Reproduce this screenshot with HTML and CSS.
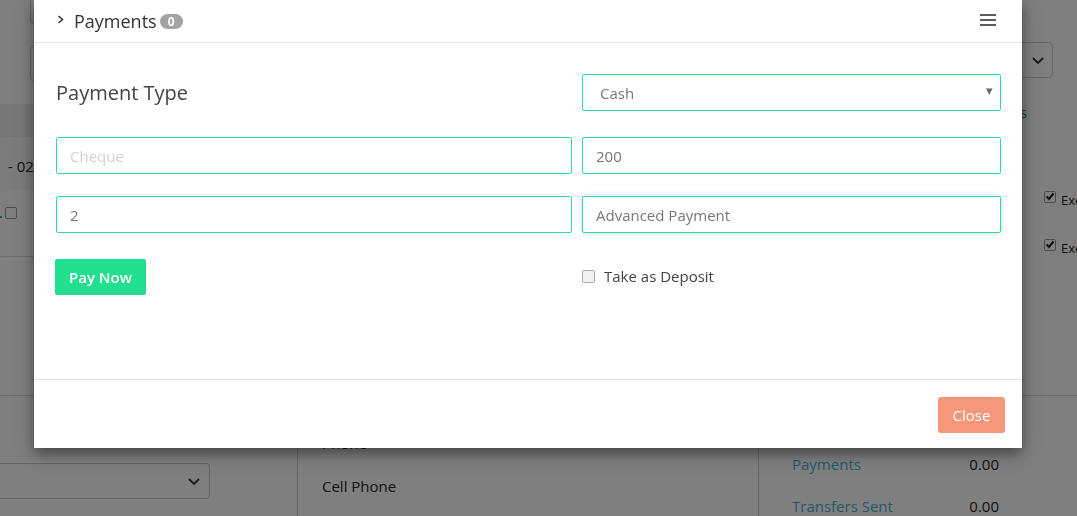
FILE: index.html
```html
<!DOCTYPE html>
<html lang="en">
<head>
<meta charset="utf-8">
<title>Payments</title>
<link rel="stylesheet" href="styles.css">
</head>
<body>
<div class="page">
  <section class="top">
    <div class="top-main">
      <div class="filter-row first"><div class="fake-input"></div></div>
      <div class="filter-row second"><div class="fake-input"></div></div>
      <div class="thead"></div>
      <div class="trow striped"><span class="cell-text">- 02-2019</span></div>
      <div class="trow tall"><span class="dot"></span><span class="cb"></span></div>
      <div class="tfill"></div>
    </div>
    <div class="top-side">
      <div class="side-select">
        <svg class="chev-down" width="12" height="7" viewBox="0 0 12 7"><polyline points="1,1 6,6 11,1" fill="none" stroke="#333" stroke-width="1.8"/></svg>
      </div>
      <div class="side-link">Transactions</div>
      <div class="side-check first"><span class="cb checked"><svg width="10" height="9" viewBox="0 0 10 9"><polyline points="1.5,4.5 4,7 8.5,1.5" fill="none" stroke="#222" stroke-width="2"/></svg></span><span>Exempt</span></div>
      <div class="side-check"><span class="cb checked"><svg width="10" height="9" viewBox="0 0 10 9"><polyline points="1.5,4.5 4,7 8.5,1.5" fill="none" stroke="#222" stroke-width="2"/></svg></span><span>Exempt</span></div>
    </div>
  </section>
  <section class="bottom">
    <div class="col-left">
      <div class="bottom-select">
        <svg class="chev-down" width="12" height="7" viewBox="0 0 12 7"><polyline points="1,1 6,6 11,1" fill="none" stroke="#333" stroke-width="1.8"/></svg>
      </div>
    </div>
    <div class="col-mid">
      <div class="mid-line">Phone</div>
      <div class="mid-line">Cell Phone</div>
    </div>
    <div class="col-right">
      <div class="sum-row"><span class="sum-link">Payments</span><span class="sum-val">0.00</span></div>
      <div class="sum-row"><span class="sum-link">Transfers Sent</span><span class="sum-val">0.00</span></div>
    </div>
  </section>
</div>

<div class="backdrop"></div>

<div class="modal">
  <div class="modal-header">
    <svg class="chev-right" width="7" height="9" viewBox="0 0 7 9"><polyline points="1.5,1 5.5,4.5 1.5,8" fill="none" stroke="#333" stroke-width="1.5"/></svg>
    <span class="modal-title">Payments</span>
    <span class="badge">0</span>
    <span class="spacer"></span>
    <svg class="hamburger" width="16" height="12" viewBox="0 0 16 12"><line x1="0" y1="1" x2="16" y2="1" stroke="#333" stroke-width="1.6"/><line x1="0" y1="6" x2="16" y2="6" stroke="#333" stroke-width="1.6"/><line x1="0" y1="11" x2="16" y2="11" stroke="#333" stroke-width="1.6"/></svg>
  </div>
  <div class="modal-body">
    <div class="form-grid">
      <div class="label-cell">Payment Type</div>
      <div class="select"><span>Cash</span><span class="caret">&#9662;</span></div>

      <input class="field" type="text" placeholder="Cheque">
      <input class="field" type="text" value="200">

      <input class="field row3" type="text" value="2">
      <input class="field row3 focused" type="text" value="Advanced Payment">

      <div class="btn-cell"><button class="btn pay">Pay Now</button></div>
      <label class="check-cell"><span class="cb-box"></span><span>Take as Deposit</span></label>
    </div>
  </div>
  <div class="modal-footer">
    <button class="btn close">Close</button>
  </div>
</div>
</body>
</html>
```

FILE: styles.css
```css
* { box-sizing: border-box; }

html, body {
  margin: 0;
  padding: 0;
}

body {
  font-family: "Open Sans", "Liberation Sans", sans-serif;
  color: #333;
  background: #fff;
  width: 1077px;
  height: 516px;
  overflow: hidden;
  position: relative;
}

/* ---------- background page ---------- */
.page {
  width: 1077px;
  height: 516px;
  display: flex;
  flex-direction: column;
}

.top {
  height: 399px;
  display: flex;
  border-bottom: 1px solid #ddd;
}

.top-main {
  width: 760px;
  flex-shrink: 0;
  display: flex;
  flex-direction: column;
}

.filter-row.first { margin-top: -6px; height: 30px; }
.filter-row.second { margin-top: 22px; height: 35px; }

.fake-input {
  margin-left: 30px;
  height: 100%;
  border: 1px solid #ccc;
  border-radius: 4px;
}

.thead {
  margin-top: 23px;
  height: 33px;
  background: #efefef;
}

.trow.striped {
  height: 53px;
  background: #f9f9f9;
  padding: 20px 0 0 8px;
  font-size: 15px;
  line-height: 18px;
  color: #222;
  white-space: nowrap;
}

.trow.tall {
  height: 67px;
  border-bottom: 1px solid #ddd;
  display: flex;
  align-items: flex-start;
  padding-top: 17px;
}

.dot {
  width: 2px;
  height: 2px;
  margin-top: 9px;
  background: #3b9bc0;
}

.cb {
  flex-shrink: 0;
  width: 12px;
  height: 12px;
  border: 1px solid #999;
  border-radius: 2px;
  background: #fff;
  margin-left: 3px;
  display: inline-flex;
  align-items: center;
  justify-content: center;
}

.tfill { flex: 1; }

.top-side {
  flex: 1;
  min-width: 0;
  display: flex;
  flex-direction: column;
  padding-right: 24px;
}

.side-select {
  margin-top: 42px;
  height: 36px;
  border: 1px solid #ccc;
  border-radius: 4px;
  display: flex;
  align-items: center;
  justify-content: flex-end;
  padding-right: 8px;
}

.side-link {
  margin-top: 26px;
  font-size: 15px;
  line-height: 16px;
  color: #2c6f86;
  text-align: right;
  padding-right: 26px;
}

.side-check {
  display: flex;
  align-items: center;
  gap: 5px;
  padding-left: 284px;
  font-size: 13px;
  line-height: 16px;
  color: #222;
  white-space: nowrap;
  margin-top: 32px;
}

.side-check span { flex-shrink: 0; }

.side-check.first { margin-top: 72px; }

.side-check .cb { margin-left: 0; margin-top: -7px; }

.bottom {
  flex: 1;
  display: grid;
  grid-template-columns: 297px 462px 318px;
}

.col-left { padding-top: 67px; }

.bottom-select {
  width: 210px;
  height: 36px;
  border: 1px solid #ccc;
  border-left: none;
  border-radius: 0 4px 4px 0;
  display: flex;
  align-items: center;
  justify-content: flex-end;
  padding-right: 9px;
}

.col-mid {
  border-left: 1px solid #ccc;
  border-right: 1px solid #ccc;
  padding: 37px 0 0 24px;
  display: flex;
  flex-direction: column;
  gap: 23px;
}

.mid-line {
  font-size: 15px;
  line-height: 20px;
  color: #222;
}

.col-right {
  padding: 58px 78px 0 33px;
  display: flex;
  flex-direction: column;
  gap: 22px;
}

.sum-row {
  display: flex;
  justify-content: space-between;
  font-size: 15px;
  line-height: 20px;
}

.sum-link { color: #4ab3d6; }
.sum-val { color: #222; }

/* ---------- backdrop ---------- */
.backdrop {
  position: fixed;
  inset: 0;
  background: rgba(0, 0, 0, 0.5);
}

/* ---------- modal ---------- */
.modal {
  position: absolute;
  top: 0;
  left: 34px;
  width: 988px;
  background: #fff;
  box-shadow: 0 5px 15px rgba(0, 0, 0, 0.5);
}

.modal-header {
  height: 43px;
  border-bottom: 1px solid #e5e5e5;
  display: flex;
  align-items: center;
  padding: 0 26px 1px 23px;
}

.chev-right { margin-top: -3px; }

.modal-title {
  margin-left: 10px;
  font-size: 18px;
  line-height: 24px;
  color: #333;
}

.badge {
  margin-left: 3px;
  margin-top: 2px;
  width: 23px;
  height: 15px;
  border-radius: 8px;
  background: #a3a3a3;
  color: #fff;
  font-size: 12px;
  font-weight: 700;
  line-height: 15px;
  text-align: center;
}

.spacer { flex: 1; }

.hamburger { margin-top: -1px; }

.modal-body {
  height: 336px;
  padding: 31px 21px 0 22px;
}

.form-grid {
  display: grid;
  grid-template-columns: 516px 419px;
  column-gap: 10px;
  row-gap: 26px;
}

.label-cell {
  align-self: center;
  font-size: 20px;
  line-height: 26px;
  color: #444;
}

.select {
  height: 37px;
  border: 1px solid #2ee091;
  border-radius: 2px;
  display: flex;
  align-items: center;
  justify-content: space-between;
  padding: 0 7px 0 17px;
  font-size: 15px;
  color: #777;
}

.caret {
  font-size: 13px;
  color: #666;
  margin-top: -6px;
}

.field {
  height: 37px;
  border: 1px solid #2ee091;
  border-radius: 2px;
  padding: 0 13px;
  font-family: "Open Sans", "Liberation Sans", sans-serif;
  font-size: 15px;
  color: #777;
  background: #fff;
  outline: none;
  width: 100%;
}

.field::placeholder { color: #d0d0d0; }

.field.row3 { margin-top: -4px; }

.field.focused {
  box-shadow: 0 0 6px rgba(102, 175, 233, 0.45);
}

.btn {
  font-family: "Open Sans", "Liberation Sans", sans-serif;
  font-size: 15px;
  color: #fff;
  border: none;
  height: 36px;
  cursor: pointer;
}

.btn-cell { margin-left: -1px; }

.btn.pay {
  width: 91px;
  background: #22df8f;
  border-radius: 2px;
  font-weight: 600;
}

.check-cell {
  display: flex;
  align-items: center;
  gap: 9px;
  font-size: 15px;
  color: #444;
  padding-bottom: 2px;
}

.cb-box {
  width: 13px;
  height: 13px;
  border: 1px solid #aaa;
  border-radius: 2px;
  background: #f3f3f3;
}

.modal-footer {
  border-top: 1px solid #e5e5e5;
  padding: 17px 17px 15px;
  display: flex;
  justify-content: flex-end;
}

.btn.close {
  width: 67px;
  background: #f5977a;
  border-radius: 3px;
  padding-bottom: 2px;
}
```
